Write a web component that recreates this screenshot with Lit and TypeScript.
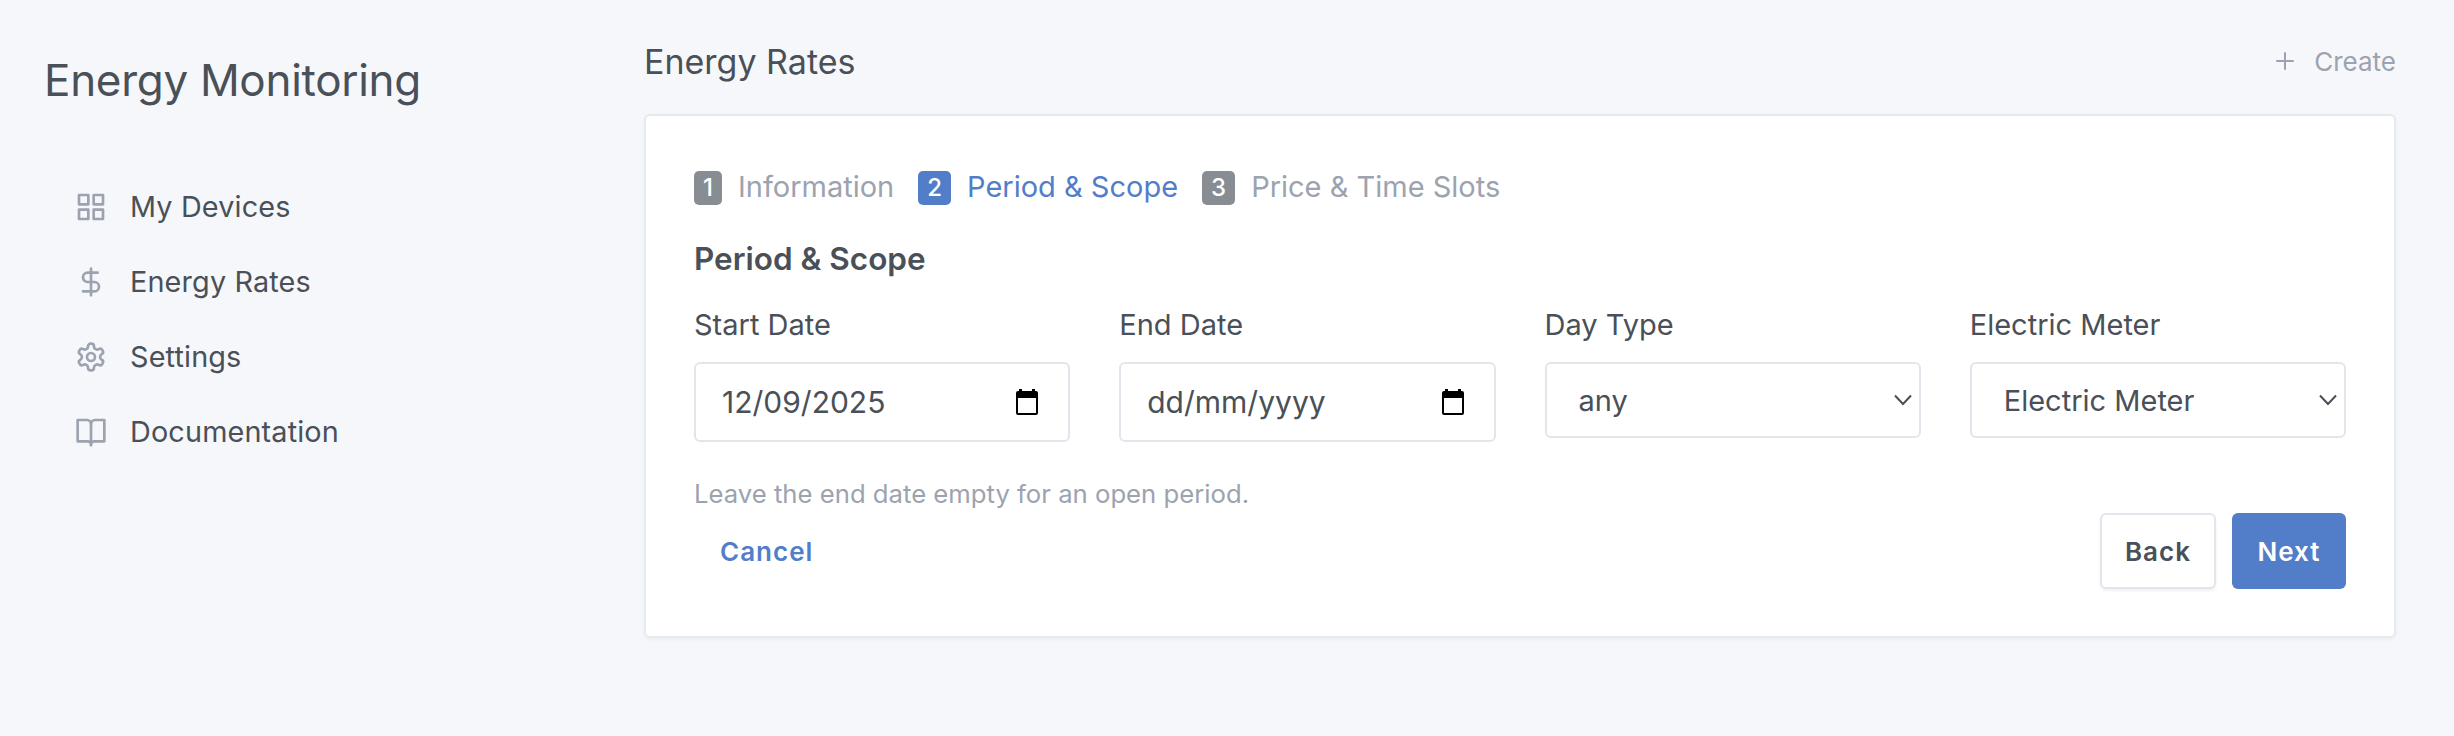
import { LitElement, css, html, svg } from 'lit'
import { customElement } from 'lit/decorators.js'

const icon = (content: unknown) => html`
  <svg class="nav-icon" viewBox="0 0 24 24" fill="none" stroke="currentColor" stroke-width="2" stroke-linecap="round" stroke-linejoin="round">
    ${content}
  </svg>
`

const navItems = [
  {
    label: 'My Devices',
    icon: svg`<rect x="3" y="3" width="7" height="7"/><rect x="14" y="3" width="7" height="7"/><rect x="14" y="14" width="7" height="7"/><rect x="3" y="14" width="7" height="7"/>`,
  },
  {
    label: 'Energy Rates',
    icon: svg`<line x1="12" y1="2" x2="12" y2="22"/><path d="M17 5H9.5a3.5 3.5 0 0 0 0 7h5a3.5 3.5 0 0 1 0 7H6"/>`,
  },
  {
    label: 'Settings',
    icon: svg`<path d="M12.22 2h-.44a2 2 0 0 0-2 2v.18a2 2 0 0 1-1 1.73l-.43.25a2 2 0 0 1-2 0l-.15-.08a2 2 0 0 0-2.73.73l-.22.38a2 2 0 0 0 .73 2.73l.15.1a2 2 0 0 1 1 1.72v.51a2 2 0 0 1-1 1.74l-.15.09a2 2 0 0 0-.73 2.73l.22.38a2 2 0 0 0 2.73.73l.15-.08a2 2 0 0 1 2 0l.43.25a2 2 0 0 1 1 1.73V20a2 2 0 0 0 2 2h.44a2 2 0 0 0 2-2v-.18a2 2 0 0 1 1-1.73l.43-.25a2 2 0 0 1 2 0l.15.08a2 2 0 0 0 2.73-.73l.22-.39a2 2 0 0 0-.73-2.73l-.15-.08a2 2 0 0 1-1-1.74v-.5a2 2 0 0 1 1-1.74l.15-.09a2 2 0 0 0 .73-2.73l-.22-.38a2 2 0 0 0-2.73-.73l-.15.08a2 2 0 0 1-2 0l-.43-.25a2 2 0 0 1-1-1.73V4a2 2 0 0 0-2-2z"/><circle cx="12" cy="12" r="3"/>`,
  },
  {
    label: 'Documentation',
    icon: svg`<path d="M12 6v16"/><path d="M2 3h7a3 3 0 0 1 3 3 3 3 0 0 1 3-3h7v16h-7.5q-2.5 0-2.5 2 0-2-2.5-2H2z"/>`,
  },
]

const steps = [
  { n: 1, label: 'Information', active: false },
  { n: 2, label: 'Period & Scope', active: true },
  { n: 3, label: 'Price & Time Slots', active: false },
]

@customElement('app-root')
export class AppRoot extends LitElement {
  static styles = css`
    :host {
      display: flex;
      width: 100%;
      min-height: 736px;
      box-sizing: border-box;
      background: #f6f7fb;
      color: #4a5057;
      font-family: Inter, 'Noto Sans', sans-serif;
    }

    .sidebar {
      flex: none;
      width: 644px;
      box-sizing: border-box;
      padding: 52px 44px 0;
    }

    .brand {
      margin: 0;
      font-size: 44px;
      font-weight: 400;
      letter-spacing: -0.3px;
      line-height: 56px;
    }

    .nav {
      display: flex;
      flex-direction: column;
      gap: 20px;
      margin-top: 71px;
      padding-left: 31px;
    }

    .nav-item {
      display: flex;
      align-items: center;
      gap: 23px;
      height: 55px;
      font-size: 28.8px;
      letter-spacing: 0.15px;
    }

    .nav-icon {
      flex: none;
      width: 32px;
      height: 32px;
      color: #9ca3af;
    }

    .main {
      flex: none;
      width: 1752px;
      padding-top: 36px;
    }

    .page-head {
      display: flex;
      align-items: center;
      justify-content: space-between;
      height: 50px;
      margin-bottom: 28px;
    }

    .page-title {
      margin: 0;
      font-size: 34px;
      font-weight: 400;
    }

    .create {
      display: flex;
      align-items: center;
      gap: 17px;
      color: #9ca3af;
      font-size: 26px;
    }

    .create svg {
      width: 24px;
      height: 24px;
    }

    .card {
      box-sizing: border-box;
      height: 524px;
      padding: 54px 48px 0;
      background: #fff;
      border: 2px solid #e5e9f0;
      border-radius: 6px;
      box-shadow: 0 2px 4px rgb(0 0 0 / 4%);
    }

    .steps {
      display: flex;
      align-items: center;
      gap: 24px;
      height: 36px;
    }

    .step {
      display: flex;
      align-items: center;
      gap: 16px;
      color: #9ca3af;
      font-size: 29px;
      line-height: 34px;
    }

    .step.active {
      color: #527dc9;
    }

    .step-label {
      margin-top: -2px;
    }

    .badge {
      display: flex;
      align-items: center;
      justify-content: center;
      height: 34px;
      padding: 0 9px;
      box-sizing: border-box;
      border-radius: 5px;
      background: #888d93;
      color: #fff;
      font-size: 24px;
      font-weight: 500;
    }

    .step.active .badge {
      background: #527dc9;
    }

    .section-title {
      margin: 27px 0 0;
      font-size: 31.5px;
      font-weight: 600;
      line-height: 52px;
    }

    .fields {
      display: grid;
      grid-template-columns: repeat(4, 1fr);
      gap: 49px;
      margin-top: 20px;
    }

    .field-label {
      font-size: 29px;
      line-height: 40px;
      margin-bottom: 17px;
    }

    .control {
      display: flex;
      align-items: center;
      justify-content: space-between;
      box-sizing: border-box;
      height: 80px;
      background: #fff;
      border: 2px solid #e2e6ec;
      border-radius: 6px;
      font-size: 29px;
    }

    .date {
      padding: 0 30px 0 26px;
      font-size: 30px;
    }

    .date svg {
      width: 22px;
      height: 26px;
    }

    .select {
      height: 76px;
      padding: 0 0 0 32px;
    }

    .select svg {
      width: 18px;
      height: 12px;
      margin-right: 7px;
    }

    .hint {
      margin: 34px 0 0;
      color: #9ca3af;
      font-size: 25.7px;
      line-height: 36px;
    }

    .actions {
      display: flex;
      align-items: center;
      gap: 16px;
      margin-top: 1px;
    }

    .button {
      display: flex;
      align-items: center;
      justify-content: center;
      box-sizing: border-box;
      height: 76px;
      border-radius: 6px;
      font-size: 26px;
      font-weight: 600;
      letter-spacing: 1px;
    }

    .cancel {
      padding-left: 26px;
      margin-right: auto;
      color: #527dc9;
    }

    .back {
      width: 116px;
      background: #fff;
      border: 2px solid #e2e6ec;
      box-shadow: 0 2px 3px rgb(0 0 0 / 6%);
    }

    .next {
      width: 114px;
      background: #527dc9;
      color: #fff;
    }
  `

  private renderCalendar() {
    return html`
      <svg viewBox="0 0 22 26" aria-hidden="true">
        <path fill-rule="evenodd" d="M3 0h3v2h10V0h3v2h1a2 2 0 0 1 2 2v20a2 2 0 0 1-2 2H2a2 2 0 0 1-2-2V4a2 2 0 0 1 2-2h1zM2 9v15h18V9z" />
      </svg>
    `
  }

  private renderChevron() {
    return html`
      <svg viewBox="0 0 18 12" fill="none" stroke="#4a5057" stroke-width="2" aria-hidden="true">
        <path d="M1 1.5l8 8.5 8-8.5" />
      </svg>
    `
  }

  render() {
    return html`
      <aside class="sidebar">
        <h1 class="brand">Energy Monitoring</h1>
        <nav class="nav">
          ${navItems.map((item) => html`<div class="nav-item">${icon(item.icon)}<span>${item.label}</span></div>`)}
        </nav>
      </aside>
      <main class="main">
        <header class="page-head">
          <h2 class="page-title">Energy Rates</h2>
          <div class="create">
            <svg viewBox="0 0 24 24" fill="none" stroke="currentColor" stroke-width="2" stroke-linecap="round"><path d="M12 4v16M4 12h16" /></svg>
            <span>Create</span>
          </div>
        </header>
        <section class="card">
          <div class="steps">
            ${steps.map((step) => html`
              <div class="step ${step.active ? 'active' : ''}">
                <span class="badge">${step.n}</span>
                <span class="step-label">${step.label}</span>
              </div>
            `)}
          </div>
          <h3 class="section-title">Period &amp; Scope</h3>
          <div class="fields">
            <div>
              <div class="field-label">Start Date</div>
              <div class="control date"><span>12/09/2025</span>${this.renderCalendar()}</div>
            </div>
            <div>
              <div class="field-label">End Date</div>
              <div class="control date"><span>dd/mm/yyyy</span>${this.renderCalendar()}</div>
            </div>
            <div>
              <div class="field-label">Day Type</div>
              <div class="control select"><span>any</span>${this.renderChevron()}</div>
            </div>
            <div>
              <div class="field-label">Electric Meter</div>
              <div class="control select"><span>Electric Meter</span>${this.renderChevron()}</div>
            </div>
          </div>
          <p class="hint">Leave the end date empty for an open period.</p>
          <div class="actions">
            <div class="button cancel">Cancel</div>
            <div class="button back">Back</div>
            <div class="button next">Next</div>
          </div>
        </section>
      </main>
    `
  }
}
